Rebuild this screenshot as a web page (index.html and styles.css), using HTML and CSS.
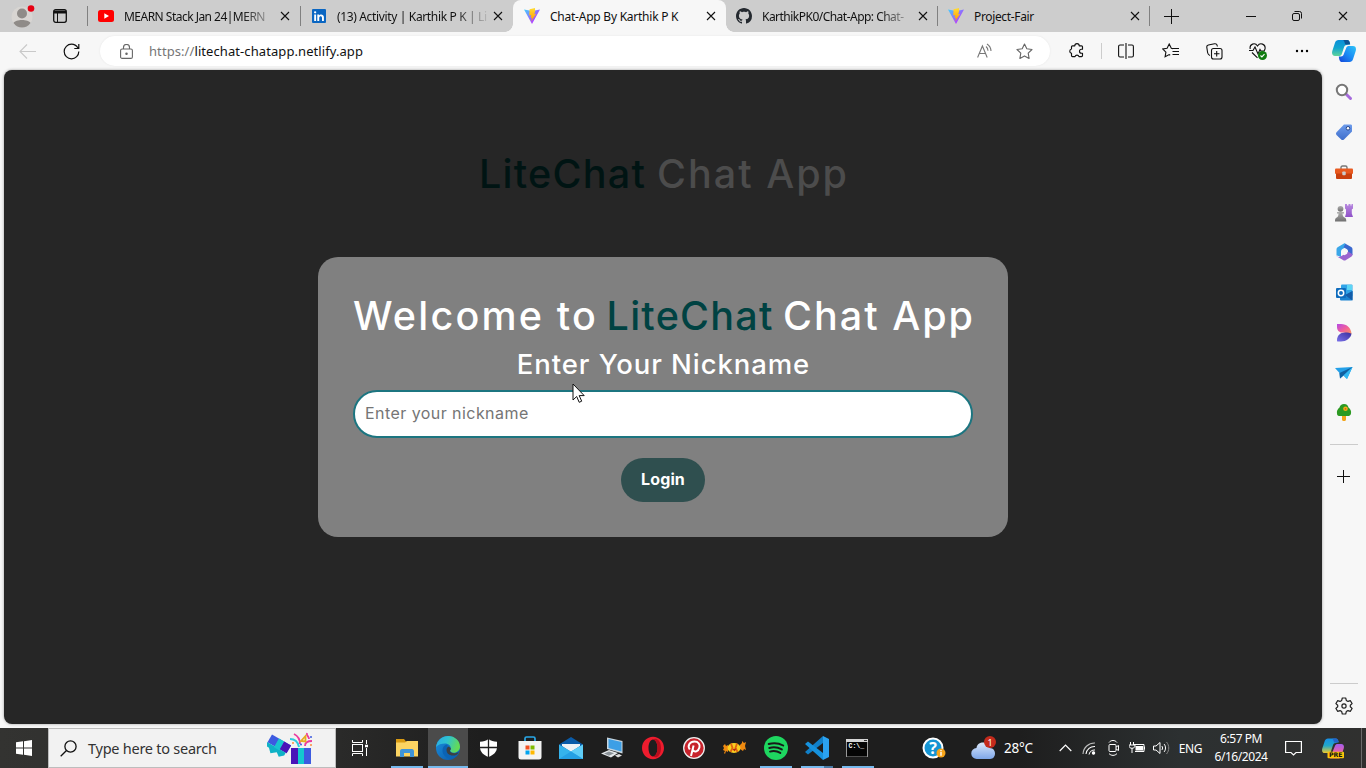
FILE: index.html
```html
<!DOCTYPE html>
<html lang="en">
<head>
<meta charset="utf-8">
<title>Chat-App By Karthik P K</title>
<link rel="stylesheet" href="styles.css">
</head>
<body>
<svg width="0" height="0" class="defs">
  <defs>
    <linearGradient id="vb" x1="0" y1="0" x2="1" y2="1"><stop offset="0" stop-color="#41d1ff"/><stop offset=".8" stop-color="#bd34fe"/></linearGradient>
    <linearGradient id="vy" x1="0" y1="0" x2="0" y2="1"><stop offset="0" stop-color="#ffdd35"/><stop offset="1" stop-color="#ff9800"/></linearGradient>
    <linearGradient id="cpA" x1="0" y1="0" x2="0" y2="1"><stop offset="0" stop-color="#0a8ed8"/><stop offset=".5" stop-color="#12a5cf"/><stop offset="1" stop-color="#5fd49b"/></linearGradient>
    <linearGradient id="cpB" x1="1" y1="0" x2="0" y2="1"><stop offset="0" stop-color="#2fc4f7"/><stop offset=".5" stop-color="#1a8bf5"/><stop offset="1" stop-color="#1544d8"/></linearGradient>
    <linearGradient id="cpC" x1="0" y1="0" x2="0" y2="1"><stop offset="0" stop-color="#168fe8"/><stop offset=".5" stop-color="#22a8c8"/><stop offset="1" stop-color="#f0cb2d"/></linearGradient>
    <linearGradient id="cpD" x1="0" y1="0" x2="0" y2="1"><stop offset="0" stop-color="#a35cf0"/><stop offset=".6" stop-color="#ee62a2"/><stop offset="1" stop-color="#f58a4b"/></linearGradient>
    <linearGradient id="edA" x1="0" y1="0" x2="1" y2=".3"><stop offset="0" stop-color="#2aa9e8"/><stop offset=".5" stop-color="#2fc3d0"/><stop offset="1" stop-color="#62da58"/></linearGradient>
    <linearGradient id="edB" x1="0" y1="0" x2="1" y2="1"><stop offset="0" stop-color="#1a91df"/><stop offset="1" stop-color="#0b55a5"/></linearGradient>
    <linearGradient id="purp" x1="0" y1="0" x2="0" y2="1"><stop offset="0" stop-color="#b98ae0"/><stop offset="1" stop-color="#8f52c8"/></linearGradient>
    <linearGradient id="gray" x1="0" y1="0" x2="0" y2="1"><stop offset="0" stop-color="#b0b0b0"/><stop offset="1" stop-color="#6f6f6f"/></linearGradient>
    <linearGradient id="tagG" x1="0" y1="0" x2="0" y2="1"><stop offset="0" stop-color="#6d9cec"/><stop offset="1" stop-color="#3f6ecb"/></linearGradient>
    <linearGradient id="desA" x1="0" y1="0" x2="1" y2="1"><stop offset="0" stop-color="#b548e8"/><stop offset=".5" stop-color="#f0609a"/><stop offset="1" stop-color="#fa9a5c"/></linearGradient>
    <linearGradient id="desB" x1="0" y1="1" x2="1" y2="0"><stop offset="0" stop-color="#7a72ea"/><stop offset="1" stop-color="#3b2f9e"/></linearGradient>
    <linearGradient id="cloud" x1="0" y1="0" x2="0" y2="1"><stop offset="0" stop-color="#dbe8fb"/><stop offset="1" stop-color="#7ea6e8"/></linearGradient>
    <symbol id="x" viewBox="0 0 10 10"><path d="M1 1l8 8M9 1L1 9" stroke="#111" stroke-width="1.1" fill="none"/></symbol>
    <symbol id="vite" viewBox="0 0 16 16"><path d="M0 1.500L8 16 16 1.500 8.300 3z" fill="url(#vb)"/><path d="M11 0L5.600 1.200l-.4 6.300 2-.4-.7 3 1.500-.4-.8 3.600L12.200 5.800l-2 .4.9-2.800z" fill="url(#vy)"/></symbol>
  </defs>
</svg>

<header class="tabstrip">
  <div class="strip-left">
    <svg class="avatar" width="24" height="24" viewBox="0 0 24 24"><circle cx="11" cy="13" r="10.500" fill="#d8d5d2"/><circle cx="11" cy="9.500" r="5" fill="#8f8b88"/><path d="M2.500 19c2-4 15-4 17 0-4 6-13 6-17 0z" fill="#8f8b88"/><circle cx="20" cy="4.500" r="3.300" fill="#e60012"/></svg>
    <svg width="14" height="14" viewBox="0 0 14 14"><rect x=".7" y=".7" width="12.600" height="12.600" rx="2" fill="none" stroke="#111" stroke-width="1.300"/><path d="M1 1.500h12v3H1z" fill="#111"/><path d="M4.500 4v9" stroke="#111"/></svg>
  </div>
  <div class="tab lined">
    <svg width="16" height="16" viewBox="0 0 16 16"><rect y="2" width="16" height="12" rx="2.500" fill="#f00"/><path d="M6.300 5.300v5.400L11 8z" fill="#fff"/></svg>
    <span class="tab-title fade tight">MEARN Stack Jan 24|MERN</span><svg class="close" width="10" height="10"><use href="#x"/></svg>
  </div>
  <div class="tab lined">
    <svg width="16" height="16" viewBox="0 0 16 16"><rect x="1" y="1" width="14" height="14" rx="1" fill="#0a66c2"/><path d="M3.200 6.500h1.900V13H3.200zM6.300 6.500h1.800v1c1-1.700 4.800-1.500 4.800 1.700V13H11V9.800c0-2.200-2.800-2-2.800 0V13H6.300z" fill="#fff"/><circle cx="4.150" cy="4.300" r="1.150" fill="#fff"/></svg>
    <span class="tab-title fade">(13) Activity | Karthik P K | Li</span><svg class="close" width="10" height="10"><use href="#x"/></svg>
  </div>
  <div class="tab active">
    <svg width="16" height="16"><use href="#vite"/></svg>
    <span class="tab-title loose">Chat-App By Karthik P K</span><svg class="close" width="10" height="10"><use href="#x"/></svg>
  </div>
  <div class="tab after">
    <svg width="16" height="16" viewBox="0 0 16 16"><path fill="#24292f" d="M8 0C3.580 0 0 3.580 0 8c0 3.540 2.290 6.530 5.470 7.590.4.070.55-.17.55-.38 0-.19-.01-.82-.01-1.490-2.010.37-2.530-.49-2.690-.94-.09-.23-.48-.94-.82-1.130-.28-.15-.68-.52-.01-.53.63-.01 1.080.58 1.230.82.72 1.210 1.870.87 2.330.66.070-.52.280-.87.510-1.070-1.780-.2-3.640-.89-3.640-3.950 0-.87.310-1.590.82-2.150-.08-.2-.36-1.020.08-2.120 0 0 .67-.21 2.200.82.640-.18 1.320-.27 2-.27s1.360.09 2 .27c1.530-1.040 2.200-.82 2.200-.82.440 1.100.160 1.920.080 2.120.510.560.820 1.270.820 2.150 0 3.070-1.870 3.750-3.650 3.950.290.250.540.730.540 1.480 0 1.070-.01 1.930-.01 2.200 0 .210.150.460.550.380A8 8 0 0016 8c0-4.420-3.580-8-8-8z"/></svg>
    <span class="tab-title fade tight">KarthikPK0/Chat-App: Chat-</span><svg class="close" width="10" height="10"><use href="#x"/></svg>
  </div>
  <div class="tab lined last">
    <svg width="16" height="16"><use href="#vite"/></svg>
    <span class="tab-title">Project-Fair</span><svg class="close" width="10" height="10"><use href="#x"/></svg>
  </div>
  <svg class="newtab" width="15" height="15" viewBox="0 0 15 15"><path d="M7.500 0v15M0 7.500h15" stroke="#111"/></svg>
  <div class="winbtns">
    <span><svg width="10" height="10"><path d="M0 5.500h10" stroke="#111"/></svg></span>
    <span><svg width="10" height="10" viewBox="0 0 10 10" fill="none" stroke="#111"><rect x=".5" y="2.500" width="7" height="7" rx="1.500"/><path d="M2.500.5h5a2 2 0 012 2v5"/></svg></span>
    <span><svg width="10" height="10"><use href="#x"/></svg></span>
  </div>
</header>

<nav class="toolbar">
  <div class="nav-left">
    <svg width="17" height="15" viewBox="0 0 17 15" fill="none" stroke="#c9c9c9" stroke-width="1.100"><path d="M17 7.500H1M8 .5l-7 7 7 7"/></svg>
    <svg width="17" height="17" viewBox="0 0 17 17" fill="none" stroke="#111" stroke-width="1.200"><path d="M15.800 8.500A7.300 7.300 0 118.500 1.200c2.800 0 5 1.400 6.500 3.800M15.800 1v4.500h-4.500"/></svg>
  </div>
  <div class="address">
    <svg width="13" height="15" viewBox="0 0 13 15" fill="none" stroke="#666" stroke-width="1.100"><rect x=".6" y="5" width="11.800" height="9.400" rx="1.500"/><path d="M3.500 5V3.500a3 3 0 016 0V5"/><circle cx="6.500" cy="9.700" r=".7" fill="#666"/></svg>
    <span class="url"><span class="scheme">https://</span>litechat-chatapp.netlify.app</span>
    <svg width="16" height="16" viewBox="0 0 16 16" fill="none" stroke="#777" stroke-width="1.100"><path d="M.6 14.500L5.400 3l4.800 11.500M2.300 10.500h6.200M9 3.500c1.300 1 2 2.500 2 4.300M10 1c2.400 1.500 3.800 3.600 4 7"/></svg>
    <svg class="star" width="17" height="17" viewBox="0 0 17 17" fill="none" stroke="#666" stroke-width="1.100" stroke-linejoin="round"><path d="M8.500 1l2.300 4.800 5.200.7-3.800 3.600.9 5.300-4.600-2.500-4.600 2.500.9-5.300L1 6.500l5.200-.7z"/></svg>
  </div>
  <div class="tools">
    <span><svg width="16" height="16" viewBox="0 0 16 16" fill="none" stroke="#111" stroke-width="1.150" stroke-linejoin="round"><path d="M3.500 2.800h2.300a2.200 2.200 0 014.400 0h2.300a1 1 0 011 1v2.400h-1a2 2 0 000 4h1v2.400a1 1 0 01-1 1H10a2.100 2.100 0 00-4 0H3.500a1 1 0 01-1-1v-2.300a2.200 2.200 0 010-4.300V3.800a1 1 0 011-1z"/></svg></span>
    <i></i>
    <span><svg width="16" height="16" viewBox="0 0 16 16" fill="none" stroke="#111" stroke-width="1.100"><path d="M6 2H2a1.400 1.400 0 00-1.400 1.400v9.200A1.400 1.400 0 002 14h4M10 2h4a1.400 1.400 0 011.400 1.400v9.200A1.400 1.400 0 0114 14h-4M8 0v16"/></svg></span>
    <span><svg width="17" height="16" viewBox="0 0 17 16" fill="none" stroke="#111" stroke-width="1.100"><path d="M11 5.600L9.300 5.300 7.200 1 5.100 5.300.7 6l3.200 3.200-.8 4.600 4.100-2.200 1 .6M10 5.500h7M10.500 8.500H17M10.500 11.500H17"/></svg></span>
    <span><svg width="17" height="17" viewBox="0 0 17 17" fill="none" stroke="#111" stroke-width="1.100"><rect x="5.500" y="5.500" width="10.500" height="10.500" rx="2"/><path d="M10.700 8v5.500M8 10.700h5.500M4 12.500C2.500 12 2 11.300 1.700 10L.8 4.300C.6 3 1.200 2.300 2.400 2L8.500.8c1.600-.3 2.500.5 2.900 2.700"/></svg></span>
    <span><svg width="18" height="17" viewBox="0 0 18 17" fill="none" stroke="#111" stroke-width="1.100"><path d="M1.200 6C.2 1 6-1 8.500 3 11 -1 17 1 16 6l-1 2.200M3 9.500l5.500 5.300M0 7.500h4L6 4l3 7 2-4.500 1 1.500h3"/><circle cx="13.500" cy="12.500" r="4.500" fill="#107c10" stroke="none"/><path d="M11.500 12.500l1.400 1.400 2.600-2.700" stroke="#fff"/></svg></span>
    <span><svg width="14" height="4" viewBox="0 0 14 4"><circle cx="2" cy="2" r="1.200"/><circle cx="7" cy="2" r="1.200"/><circle cx="12" cy="2" r="1.200"/></svg></span>
    <span class="cop"><svg width="24" height="22" viewBox="0 0 24 22"><path d="M6.500 0H15c2 0 2.600 1.300 3.200 4l-3.400 1c-1.800 0-2.500 1-3.200 3.600L10 13.500C9.400 15.500 8.500 16 6.500 16H3c-2.500 0-3.500-2-2.700-5L3 2.800C3.600 1 4.800 0 6.500 0z" fill="url(#cpA)"/><path d="M11 0h4c2 0 2.600 1.300 3.200 4.500h-4.500C12.600 4.500 13 1 11 0z" fill="#0d5494"/><path d="M17.500 6H21c2.500 0 3.500 2 2.700 5L21 19.200c-.6 1.800-1.800 2.800-3.500 2.800H10c-2 0-2.600-1.300-3.200-5.500h2c2 0 2.700-1 3.400-3.500L14 8.500C14.600 6.500 15.500 6 17.500 6z" fill="url(#cpB)"/></svg></span>
  </div>
</nav>

<div class="body">
  <main class="page">
    <h1 class="behind"><span class="brand">LiteChat</span><span class="rest">Chat App</span></h1>
    <section class="card">
      <h2 class="welcome"><span class="hello">Welcome to</span><span class="brand">LiteChat</span><span class="rest">Chat App</span></h2>
      <h3 class="sub">Enter Your Nickname</h3>
      <input class="nick" type="text" placeholder="Enter your nickname">
      <button class="login">Login</button>
      <svg class="cursor" width="13" height="20" viewBox="0 0 13 20"><path d="M1 1v16l3.700-3.500 2.500 5.800 2.500-1.100-2.500-5.600h5z" fill="#fff" stroke="#111"/></svg>
    </section>
  </main>
  <aside class="side">
    <span><svg width="18" height="18" viewBox="0 0 18 18"><path d="M10.500 10.500l5 5" stroke="#a66bdc" stroke-width="3" stroke-linecap="round"/><circle cx="7" cy="7" r="5.200" fill="#fff" stroke="#777" stroke-width="2"/></svg></span>
    <span><svg width="18" height="18" viewBox="0 0 18 18"><path d="M9 1.500h6.500c1 0 1.500.5 1.500 1.500v5.500L9 16.500c-1 .8-2 .7-2.800 0L1.500 12c-.7-1-.7-2 0-2.800z" fill="url(#tagG)"/><circle cx="13" cy="5.300" r="1.800" fill="#fff" stroke="#28488e"/></svg></span>
    <span class="low"><svg width="18" height="16" viewBox="0 0 18 16"><path d="M6 4V2.500C6 1.500 6.500 1 7.500 1h3c1 0 1.500.5 1.500 1.500V4" fill="none" stroke="#777" stroke-width="1.400"/><rect y="3.500" width="18" height="5.500" rx="1" fill="#e85a20"/><path d="M1 8.500h16V13a1 1 0 01-1 1H2a1 1 0 01-1-1z" fill="#c9400f"/><rect x="7.300" y="6.500" width="3.400" height="3.800" rx=".8" fill="#ccc"/></svg></span>
    <span class="low"><svg width="18" height="18" viewBox="0 0 18 18"><path d="M10 0h2v1.500h1.500V0h2v1.500H16.500V0H18v4.500l-1.200 1v4L18 13H10l1-3.500v-4L10 4.500z" fill="url(#purp)"/><circle cx="5.500" cy="4.800" r="2.900" fill="url(#gray)"/><path d="M2 8h7v1.500H7.500c0 2 .5 3.300 2.500 4.200 1 .5 1.300 1.300 1.300 3.800H0c0-2.500.3-3.300 1.300-3.800 2-.9 2.200-2.200 2.200-4.200H2z" fill="url(#gray)"/></svg></span>
    <span><svg width="17" height="18" viewBox="0 0 17 18"><path d="M8 .5L2 4C1 4.600.5 5.400.5 6.500v5.800L5 14V9c0-1.500.4-2.200 1.500-2.900L11 3.500 9.500.7C9 .3 8.600.2 8 .5z" fill="#3aa6e8"/><path d="M9.500.7l5.700 3.300c1 .6 1.300 1.300 1.300 2.500V12L12 13V8.500c0-1.300-.3-1.900-1.400-2.500L7.500 4.200z" fill="#3a68cf"/><path d="M.5 12c.2 2 2.500 2.500 4.500 1.300l5.500-3.300L12 9v-.5l4.500 2.800c0 1.200-.4 1.900-1.300 2.500L10 17c-1.100.7-1.900.7-3 0l-5.200-3C.9 13.500.5 13 .5 12z" fill="#9a64cf"/><path d="M8.500 6L11.200 7.500v3.200L8.500 12.200l-2.700-1.500V7.500z" fill="#f7f7f7"/></svg></span>
    <span><svg width="17" height="17" viewBox="0 0 17 17"><rect x="5" y=".5" width="11.500" height="12" rx="1" fill="#30a4e8"/><path d="M11 1h5v5h-5z" fill="#5cd6f5"/><path d="M4 7l6 4 6.500-4v8.500a1 1 0 01-1 1H5a1 1 0 01-1-1z" fill="#1b83d1"/><path d="M16.500 7v9.500L9 11z" fill="#145ca8"/><rect y="4" width="10" height="10" rx="1" fill="#0f6cbd"/><circle cx="5" cy="9" r="2.700" fill="none" stroke="#fff" stroke-width="1.500"/></svg></span>
    <span><svg width="16" height="18" viewBox="0 0 16 18"><path d="M1 0h4c6 0 10 4 10.500 9.500C14 12 10 8 6 8.500 3 8.500 1 6 1 3z" fill="url(#desA)"/><path d="M15.500 9.500C15 14 10 17.500 5 17.500H2c-1 0-1-.5-1-1.500 0-4 3-7.500 8-7.500 3 0 5 .5 6.500 1z" fill="url(#desB)"/></svg></span>
    <span><svg width="18" height="14" viewBox="0 0 18 14"><path d="M0 2L17.500 1 12 13 8.500 9.500 5 12.500 4.500 7z" fill="#24a0e8"/><path d="M17.500 1L8.500 9.500 5 12.500 4.500 7z" fill="#1060a0"/><path d="M17.500 1L12 13 8.500 9.500z" fill="#32b8f2"/></svg></span>
    <span><svg width="16" height="19" viewBox="0 0 16 19"><path d="M6 12h4v4.500c0 2-4 2-4 0z" fill="#f3a61c"/><path d="M8 1c3 0 4 1.800 4.500 3.500C14.500 6 15.500 8 15 10.500c-.4 2-1.500 2.500-3.500 2.500h-7C2 13 1 12.500 1 10.500.5 8 1.500 6 3.500 4.500 4 2.500 5.500 1 8 1z" fill="#2c9a22"/><circle cx="9.500" cy="5.800" r="2.300" fill="#f6ad18"/><circle cx="9.500" cy="5.800" r=".9" fill="#d2601a"/></svg></span>
    <hr class="h1">
    <svg class="plus" width="13" height="13" viewBox="0 0 13 13"><path d="M6.500 0v13M0 6.500h13" stroke="#111"/></svg>
    <hr class="h2">
    <svg class="gear" width="18" height="18" viewBox="0 0 18 18" fill="none" stroke="#222" stroke-width="1.200" stroke-linejoin="round"><path d="M7.300 1h3.400l.6 2.400 1.700 1 2.400-.7 1.700 2.900L15.300 8.300v1.400l1.800 1.700-1.700 2.900-2.400-.7-1.700 1-.6 2.400H7.300l-.6-2.400-1.700-1-2.400.7-1.700-2.900 1.800-1.700V8.300L.9 6.600l1.700-2.900 2.400.7 1.700-1z"/><circle cx="9" cy="9" r="2.100"/></svg>
  </aside>
</div>

<footer class="taskbar">
  <div class="start"><svg width="16" height="16" viewBox="0 0 16 16" fill="#fff"><path d="M0 2.300L7 1.300v6.200H0zM8 1.200L16 0v7.500H8zM0 8.500h7v6.200l-7-1zM8 8.500h8V16l-8-1.200z"/></svg></div>
  <div class="search">
    <svg width="17" height="17" viewBox="0 0 17 17" fill="none" stroke="#111" stroke-width="1.300"><circle cx="10.500" cy="6.500" r="5.600"/><path d="M6.500 10.500L.7 16.300"/></svg>
    <span>Type here to search</span>
    <svg class="gift" width="46" height="34" viewBox="0 0 46 34"><g transform="translate(5 3.500) rotate(30)"><rect width="22" height="9" fill="#3d5be0"/><rect x="14" y="0" width="8" height="9" fill="#4a13b8"/><path d="M-1 9h22v3l-4 4-4-3-5 4-4-4H0z" fill="#0fb2c6"/><rect x="8" width="6" height="10" fill="#19c5cf"/></g><rect x="24" y="17" width="20" height="16" fill="#4a13b8"/><rect x="35" y="17" width="9" height="16" fill="#3d5be0"/><rect x="31" y="17" width="6" height="16" fill="#14c8cf"/><path d="M32 16C31 11 28 8 23 8" fill="none" stroke="#2fc9dd" stroke-width="2"/><path d="M27 3c4 2 6 6 6 10M38 15c0-4 3-5 7-5M40 2c-1 3 2 3 2 6" fill="none" stroke="#ec3aa0" stroke-width="1.800"/><path d="M34 10l4.500-5v5.500z" fill="none" stroke="#e7ac20" stroke-width="1.800"/><circle cx="44" cy="6" r="1" fill="#3d5be0"/><circle cx="26" cy="12" r="1" fill="#ff8c3b"/><circle cx="34" cy="13.500" r="1" fill="#3d5be0"/><circle cx="44" cy="14" r="1" fill="#ff8c3b"/></svg>
  </div>
  <div class="apps">
    <span class="tv"><svg width="16" height="16" viewBox="0 0 16 16" fill="none" stroke="#fff"><path d="M.5 0v2.500h10V0M.5 16v-2.500h10V16M14.500 0v4M14.500 8v8"/><rect x=".5" y="4.500" width="10" height="7"/><path d="M13 6h3" stroke-width="2.500"/></svg></span>
    <span class="run"><svg width="22" height="18" viewBox="0 0 22 18"><path d="M0 0h8l2 2.500h12V17H0z" fill="#d99a12"/><path d="M0 3.500h9L11 2h11v15.500H0z" fill="#fcd462"/><path d="M4 18v-5.500c0-1.500.7-2.500 2-2.500h10c1.300 0 2 1 2 2.500V18h-4v-4H8v4z" fill="#3f94d8"/></svg></span>
    <span class="run on"><svg width="24" height="24" viewBox="0 0 24 24"><circle cx="12" cy="12" r="12" fill="url(#edB)"/><path d="M0 11C1 4.500 6 0 12.300 0 19 0 24 5 24 10.700c0 3.500-2.800 6-6.300 6-2.200 0-3.800-.8-3.800-1.700 0-.7.900-1.100.9-2.800 0-2.500-2.500-4.700-5.800-4.700C5.500 7.500 2 8.500 0 11z" fill="url(#edA)"/><path d="M14 14.500c-3.500-2.500-1.500-5-3-6-3 .5-4.500 3-4.500 6C6.500 19 10.500 22.500 15 23c3-.8 5-2.300 7-5-3 1-6 .5-8-3.500z" fill="#0b63b5"/><path d="M14.800 12.200c0 2-.9 2-.9 2.800 0 1 1.600 2.300 4.500 2.300 1.800 0 3-.6 4.100-1.300-.5 3-4 4-7 3.500-3-.6-5-2.500-5-5.500 0-2 1-3 2.300-3.500z" fill="#3c4143"/></svg></span>
    <span><svg width="17" height="18" viewBox="0 0 17 18"><path d="M8.500 0C11 1.800 13.500 2.500 17 2.700V8c0 5-3.500 8-8.500 10C3.500 16 0 13 0 8V2.700C3.500 2.500 6 1.800 8.500 0z" fill="#fff"/><path d="M8.500 0v18M0 8.500h17" stroke="#1e1e1e" stroke-width="1.300"/></svg></span>
    <span><svg width="24" height="24" viewBox="0 0 24 24"><path d="M7 6V2.500c0-1 .5-1.500 1.500-1.500h7c1 0 1.500.5 1.500 1.500V6" fill="none" stroke="#29a8e8" stroke-width="1.700"/><path d="M.5 5h23v16a2.500 2.500 0 01-2.500 2.500H3A2.500 2.500 0 01.5 21z" fill="#f3f3f3"/><path d="M7.500 9.500h4v4h-4z" fill="#f25022"/><path d="M12.500 9.500h4v4h-4z" fill="#7fba00"/><path d="M7.500 14.500h4v4h-4z" fill="#00a4ef"/><path d="M12.500 14.500h4v4h-4z" fill="#ffb900"/></svg></span>
    <span><svg width="24" height="22" viewBox="0 0 24 22"><path d="M0 7.500L12 0l12 7.500-12 9z" fill="#0a5ba8"/><path d="M3 7h18v2l-9 6-9-6z" fill="#eef2f5"/><path d="M0 7.500l12 7 12-7V22H0z" fill="#35b3ec"/><path d="M24 7.500V22L12 14.500z" fill="#5fcdf7"/><path d="M0 22l12-7.500L24 22z" fill="#25a0e4"/></svg></span>
    <span><svg width="24" height="22" viewBox="0 0 24 22"><path d="M7 .5L22.500 4v12.500L7 12z" fill="#c9d6df"/><path d="M8.500 2L21.500 5v9.500L8.500 11z" fill="#3d9fe6"/><path d="M1 16.500l8-3.500 9 3-7 4.500z" fill="#e4e8ea"/><path d="M4 16.500l5-2 5 1.700-5 2.500z" fill="#8a9197"/><path d="M15 18.500l4-1.500 3 1.500-4 2z" fill="#ddd"/></svg></span>
    <span><svg width="24" height="24" viewBox="0 0 24 24"><path fill-rule="evenodd" d="M12 .8c6.200 0 11 5 11 11.200s-4.800 11.200-11 11.200S1 18.200 1 12 5.800.8 12 .8zm0 2.700c-2.600 0-4.500 3.700-4.500 8.500s1.900 8.500 4.500 8.500 4.500-3.700 4.500-8.500-1.900-8.500-4.500-8.500z" fill="#ee1c2e"/><path d="M12 3.500c3.500-2.500 8 1 8 8.500s-4.500 11-8 8.500c2.500-.2 4.500-3.700 4.500-8.500S14.500 3.500 12 3.500z" fill="#b70d1c"/></svg></span>
    <span><svg width="22" height="22" viewBox="0 0 22 22"><circle cx="11" cy="11" r="10.300" fill="#c8232c" stroke="#eee" stroke-width="1.300"/><path d="M8 19l2.600-10.500M6.800 12.500C4 8.500 7 4.600 11.500 4.600c4 0 5.800 3 4.900 6-1 4-5 5.200-6.500 2.500" fill="none" stroke="#fff" stroke-width="2"/></svg></span>
    <span><svg width="23" height="16" viewBox="0 0 23 16"><path d="M0 6l2-2 1 2 2-1v7l-2-1-1 3-1-1 1-2-2-1 1-2zM17 5l2-2v-2l2 2 2-1-1 4 1 4-2-1-1 2-3-2z" fill="#f08a10"/><ellipse cx="11" cy="8" rx="6.500" ry="5" fill="#f8cf20"/><path d="M8 3.500l1.500 4.500L7.500 12M14 3.500L12.500 8l2 4" stroke="#e06410" stroke-width="1.800" fill="none"/><path d="M9.500 9l2 2.500 2-3z" fill="#b52616"/></svg></span>
    <span class="run"><svg width="24" height="24" viewBox="0 0 24 24"><circle cx="12" cy="12" r="12" fill="#1ed760"/><path d="M4.700 8c5-1.500 10-1 14.500 1.500M5.300 12c4.200-1.300 8.500-.8 12.500 1.400M6 15.600c3.500-.9 7-.6 10.300 1.300" fill="none" stroke="#191919" stroke-width="2" stroke-linecap="round"/></svg></span>
    <span class="run stacked"><svg width="24" height="24" viewBox="0 0 24 24"><path d="M18 0l6 3v18l-6 3z" fill="#2ba2f0"/><path d="M18 0v7L3 18.500 0 16z" fill="#1180c9"/><path d="M18 24v-7L3 5.500 0 8z" fill="#1692de"/></svg></span>
    <span class="run cmd"><svg width="22" height="18" viewBox="0 0 22 18"><rect x=".5" y=".5" width="21" height="17.500" fill="#050505" stroke="#999"/><path d="M0 0h22v3H0z" fill="#d5d5d5"/><path d="M18 1h3v1h-3z" fill="#333"/><text x="2.500" y="9" font-size="6.500" font-family="Liberation Mono" font-weight="700" fill="#fff">C:\_</text></svg></span>
  </div>
  <div class="tray">
    <span class="c40"><svg width="24" height="22" viewBox="0 0 24 22"><circle cx="11" cy="11" r="9.500" fill="#1695d4" stroke="#fff" stroke-width="2"/><text x="11" y="16.500" font-size="16" font-weight="700" font-family="Open Sans" text-anchor="middle" fill="#fff">?</text><circle cx="19" cy="16" r="4.500" fill="#f8a51b"/><path d="M19 13v1.300M19 15v3.700" stroke="#fff" stroke-width="1.400"/></svg></span>
    <span class="weather"><svg width="26" height="24" viewBox="0 0 26 24"><path d="M6 23a5.500 5.500 0 01-.5-11C6 8 9 6.500 12 6.500c3.500 0 6 2 6.500 5.500 4 0 5.500 3 5.500 5.500S22.500 23 19 23z" fill="url(#cloud)"/><circle cx="19" cy="6" r="6" fill="#c42b1c"/><text x="19" y="9.500" font-size="9" font-family="Noto Sans" text-anchor="middle" fill="#fff">1</text></svg><b>28°C</b></span>
    <span class="c24"><svg width="13" height="8" viewBox="0 0 13 8"><path d="M.7 7l5.800-5.800L12.300 7" fill="none" stroke="#fff" stroke-width="1.200"/></svg></span>
    <span class="c24"><svg width="14" height="14" viewBox="0 0 14 14" fill="none" stroke="#fff" stroke-width="1.100"><path d="M1 13A11.500 11.500 0 0113 2" opacity=".7"/><path d="M4 13a8.500 8.500 0 019-7.500M7 13.500A5.700 5.700 0 0113 9"/><circle cx="11.500" cy="12" r="1.200" fill="#fff"/></svg></span>
    <span class="c24"><svg width="13" height="16" viewBox="0 0 13 16" fill="none" stroke="#fff"><rect x="2" y="4.500" width="7" height="7" rx="1"/><path d="M9 7l2.500-1.500v5L9 9M2 2.500C4-.2 8-.2 10 2.500M2 13.500c2 2.500 6 2.500 8 0"/></svg></span>
    <span class="c24"><svg width="17" height="12" viewBox="0 0 17 12" fill="none" stroke="#fff"><path d="M5 2.500h10v7H6"/><rect x="7" y="4.500" width="6.500" height="3.500" fill="#fff"/><path d="M15.500 4.500v3M1.500 0v3M4.500 0v3M0 3h6v1c0 3-6 3-6 0zM3 6v5"/></svg></span>
    <span class="c24"><svg width="17" height="14" viewBox="0 0 17 14" fill="none" stroke="#fff"><path d="M.5 5h2.500l4-3.500v11L3 9H.5zM8.800 5c1 1 1 3 0 4M11 3c2 2.200 2 5.800 0 8"/><path d="M13.500 1c3 3.500 3 8.500 0 12" stroke="#888"/></svg></span>
    <span class="eng">ENG</span>
    <span class="clock"><b>6:57 PM</b><b>6/16/2024</b></span>
    <span class="c40"><svg width="17" height="17" viewBox="0 0 17 17"><path d="M.6 1.500h15.800v11H11L8.500 15 6 12.500H.6z" fill="none" stroke="#fff" stroke-width="1.200"/></svg></span>
    <span class="c40"><svg width="22" height="21" viewBox="0 0 24 22"><path d="M6.500 0H15c2 0 2.600 1.300 3.200 4l-3.400 1c-1.800 0-2.500 1-3.200 3.600L10 13.500C9.400 15.500 8.500 16 6.500 16H3c-2.500 0-3.500-2-2.700-5L3 2.800C3.600 1 4.800 0 6.500 0z" fill="url(#cpC)"/><path d="M11 0h4c2 0 2.600 1.300 3.200 4.500h-4.500C12.600 4.500 13 1 11 0z" fill="#2563c8"/><path d="M17.500 6H21c2.500 0 3.500 2 2.700 5L21 19.200c-.6 1.800-1.800 2.800-3.500 2.800H10c-2 0-2.600-1.300-3.200-5.500h2c2 0 2.700-1 3.400-3.500L14 8.500C14.600 6.500 15.500 6 17.500 6z" fill="url(#cpD)"/><rect x="6" y="14.500" width="18" height="7" rx="1" fill="#ffc50a"/><text x="15" y="20.600" font-size="6.800" font-family="DejaVu Sans" font-weight="700" text-anchor="middle" fill="#111">PRE</text></svg></span>
    <i class="peek"></i>
  </div>
</footer>
</body>
</html>
```
FILE: styles.css
```css
* { box-sizing: border-box; }
body { margin: 0; width: 1366px; height: 768px; overflow: hidden; display: flex; flex-direction: column; background: #f7f7f7; font-family: "Noto Sans", sans-serif; font-size: 12px; color: #111; }
svg { flex: none; display: block; }
.defs { position: absolute; }

.tabstrip { height: 32px; display: flex; align-items: center; background: #cdcdcd; }
.strip-left { width: 87px; display: flex; align-items: center; padding-left: 11px; gap: 18px; }
.avatar { margin-top: -1px; }
.tab { width: 213px; height: 32px; display: flex; align-items: center; padding-left: 11px; position: relative; }
.tab.after { width: 211px; padding-left: 10px; }
.tab.last { width: 212.500px; }
.tab.lined::before { content: ""; position: absolute; left: 0; top: 6px; width: 1px; height: 20px; background: #808080; }
.tab.last::after { content: ""; position: absolute; right: 0; top: 6px; width: 1px; height: 20px; background: #808080; }
.tab.active { background: #f7f7f7; border-radius: 8px 8px 0 0; }
.tab.active::before, .tab.active::after { content: ""; position: absolute; bottom: 0; width: 8px; height: 8px; }
.tab.active::before { left: -8px; background: radial-gradient(circle at 0 0, transparent 7.5px, #f7f7f7 8px); }
.tab.active::after { right: -8px; background: radial-gradient(circle at 100% 0, transparent 7.5px, #f7f7f7 8px); }
.tab-title { flex: none; margin-left: 10px; width: 151px; white-space: nowrap; font-size: 12px; letter-spacing: -0.35px; }
.tab-title.tight { letter-spacing: -0.52px; }
.tab-title.loose { letter-spacing: -0.24px; }
.fade { -webkit-mask-image: linear-gradient(90deg, #000 118px, rgba(0, 0, 0, 0.15) 148px); mask-image: linear-gradient(90deg, #000 118px, rgba(0, 0, 0, 0.15) 148px); }
.close { margin-left: 5px; }
.newtab { margin-left: 14px; }
.winbtns { margin-left: auto; display: flex; }
.winbtns span { width: 46px; display: flex; justify-content: center; }

.toolbar { height: 38px; display: flex; align-items: center; }
.nav-left { width: 100px; display: flex; align-items: center; padding-left: 19px; gap: 27px; }
.address { width: 950px; height: 30px; border-radius: 15px; background: #fff; display: flex; align-items: center; padding: 0 17px 0 20px; box-shadow: 0 0 2px #e4e4e4; }
.url { flex: 1; margin-left: 16px; font-size: 13px; letter-spacing: 0.08px; white-space: nowrap; }
.scheme { color: #767676; }
.star { margin-left: 23px; }
.tools { display: flex; align-items: center; padding-left: 5px; }
.tools span { width: 44px; display: flex; justify-content: center; }
.tools i { width: 1px; height: 16px; background: #ccc; margin: 0 2px; }
.tools .cop { width: 40px; }

.body { height: 658px; display: flex; }
.page { width: 1318px; height: 654px; margin-left: 4px; border-radius: 8px; background: #262626; box-shadow: 0 0 3px #999; display: flex; flex-direction: column; align-items: center; font-family: Inter, sans-serif; }
h1, h2, h3 { margin: 0; font-weight: 500; white-space: nowrap; }
.behind { margin-top: 74px; height: 60px; width: 368px; line-height: 60px; font-size: 39.500px; display: flex; justify-content: space-between; color: #4c4c4c; }
.behind .brand { color: #001413; }
.brand { letter-spacing: 1.25px; margin-right: -1.25px; }
.rest { letter-spacing: 2px; margin-right: -2px; }
.hello { letter-spacing: 2.2px; margin-right: -2.2px; }
.card { position: relative; width: 690px; height: 280px; margin-top: 53px; padding: 30px 35px; border-radius: 20px; background: #808080; display: flex; flex-direction: column; align-items: center; color: #fff; }
.welcome { width: 620px; height: 58px; line-height: 58px; font-size: 39.500px; display: flex; justify-content: space-between; }
.welcome .brand { color: #004242; }
.sub { height: 38px; line-height: 39px; font-size: 27.500px; letter-spacing: 0.92px; margin-right: -1px; }
.nick { margin-top: 7px; width: 620px; height: 48px; flex: none; border: 2px solid #1c7580; border-radius: 24px; padding: 0 10px 2px; font: 16px Inter, sans-serif; letter-spacing: 0.44px; background: #fff; }
.nick::placeholder { color: #757575; opacity: 1; }
.login { margin-top: 20px; width: 84px; height: 44px; flex: none; border: 0; border-radius: 22px; background: #2f4f4f; color: #fff; font: 700 16px Inter, sans-serif; letter-spacing: 0.1px; padding: 0 0 2px; }
.cursor { position: absolute; left: 254px; top: 126px; }

.side { width: 44px; display: flex; flex-direction: column; align-items: center; padding-top: 2px; }
.side span { height: 40.1px; width: 44px; display: flex; align-items: center; justify-content: center; flex: none; }
.side .low { padding-top: 2px; }
.side hr { width: 28px; border: 0; height: 1px; background: #ccc; margin: 0; flex: none; }
.side .h1 { margin-top: 11px; }
.side .plus { margin-top: 25px; margin-right: 1px; }
.side .h2 { margin-top: 200px; }
.side .gear { margin-top: 13px; }

.taskbar { height: 40px; display: flex; background: linear-gradient(90deg, #333331 0, #2a2a29 340px, #1e1e1e 480px, #1e1e1e 1020px, #2c3031 1180px, #30302f 1366px); color: #fff; }
.start { width: 48px; display: flex; align-items: center; justify-content: center; }
.search { width: 288px; background: #f2f2f2; border: 1px solid #bdbdbd; display: flex; align-items: center; padding-left: 11px; color: #333; white-space: nowrap; }
.search span { width: 168px; margin-left: 11px; font-size: 14.500px; letter-spacing: -0.25px; }
.gift { margin-left: 11px; }
.apps { display: flex; margin-left: 4px; }
.apps span { width: 41px; height: 40px; display: flex; align-items: center; justify-content: center; padding-right: 2px; position: relative; }
.apps .tv { width: 47px; padding-right: 8px; }
.apps .run::after { content: ""; position: absolute; bottom: 0; left: 4px; width: 32px; height: 2px; background: #76b9ed; }
.apps .on { width: 40px; margin-right: 1px; padding-right: 0; background: #4b4b4b; }
.apps .run.on::after { left: 0; width: 40px; }
.apps .run.stacked::after { background: linear-gradient(90deg, #76b9ed 23px, #4a7ba6 23px); }
.apps .cmd { padding-right: 4px; }
.tray { margin-left: auto; width: 452px; display: flex; align-items: center; }
.tray span { display: flex; align-items: center; justify-content: center; flex: none; }
.tray b { font-weight: 400; }
.tray .c40 { width: 40px; }
.tray .c24 { width: 24px; }
.tray .weather { width: 99px; padding-left: 17px; justify-content: flex-start; gap: 7px; font-size: 13.500px; letter-spacing: -0.25px; }
.tray .eng { width: 36px; letter-spacing: -0.4px; padding-right: 1px; }
.tray .clock { width: 64px; flex-direction: column; line-height: 18px; font-size: 12px; letter-spacing: -0.45px; white-space: nowrap; }
.peek { width: 1px; height: 40px; margin-left: 8px; background: #6b6b6b; }
```
